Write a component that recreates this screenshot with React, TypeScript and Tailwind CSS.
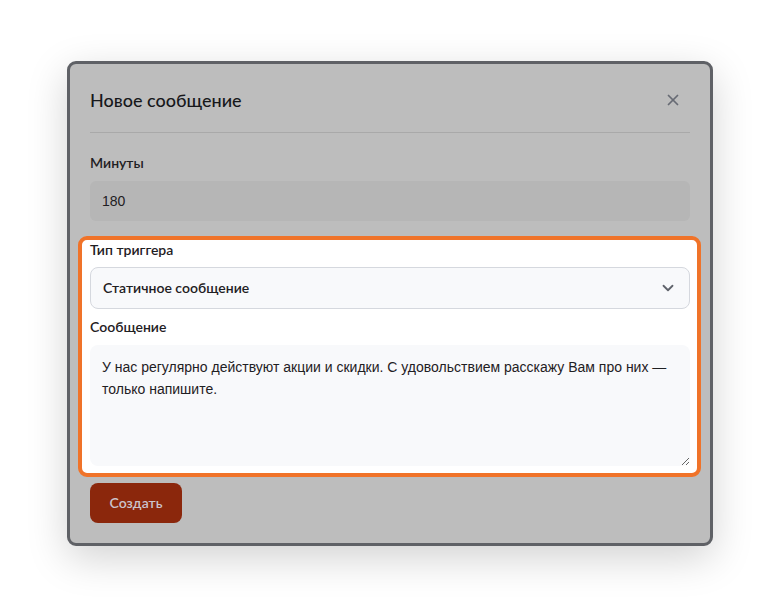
import { X, ChevronDown } from 'lucide-react'

export default function App() {
  return (
    <div className="min-h-[608px] w-full bg-white flex justify-center pt-[61px]" style={{ fontFamily: 'Lato, "Noto Sans", sans-serif' }}>
      <div className="w-[646px] h-[485px] bg-[#bdbdbd] border-[3px] border-[#5f6166] rounded-[9px] shadow-[0_12px_40px_rgba(0,0,0,0.18)] px-5 flex flex-col">
        {/* Шапка */}
        <div className="flex items-center justify-between pt-[22px] pb-[18px] border-b border-[#a9a9a9]">
          <h2 className="text-[18px] leading-7 font-medium text-[#17181b]">Новое сообщение</h2>
          <button className="text-[#676b74] mr-[8px]">
            <X className="w-[18px] h-[18px]" strokeWidth={2.3} />
          </button>
        </div>

        <div className="pt-5">
          <label className="block text-sm leading-5 font-semibold text-[#1f2023] mb-2">Минуты</label>
          <div className="h-10 rounded-md bg-[#b6b6b6] px-3 flex items-center text-sm text-[#1f2023]" style={{ fontFamily: '"Liberation Sans", Arial, sans-serif' }}>
            180
          </div>
        </div>

        {/* Подсвеченный блок */}
        <div className="mt-[15px] -ml-3 -mr-[11px] border-4 border-[#f07329] rounded-[9px] bg-white pl-2 pr-[7px] pb-[7px]">
          <label className="block text-sm leading-5 font-semibold text-[#1f2023] mb-[7px]">Тип триггера</label>
          <div className="h-[42px] rounded-lg bg-[#f8f9fb] border border-[#d5d8de] px-3 flex items-center justify-between">
            <span className="text-sm font-semibold text-[#1f2023]">Статичное сообщение</span>
            <ChevronDown className="w-[18px] h-[18px] text-[#5f636b]" strokeWidth={2.4} />
          </div>
          <label className="block text-sm leading-5 font-semibold text-[#1f2023] mt-2 mb-2">Сообщение</label>
          <textarea
            className="block w-full h-[121px] rounded-lg bg-[#f8f9fb] px-3 pt-[11px] text-sm leading-[22px] text-[#1f2023] outline-none"
            style={{ fontFamily: '"Liberation Sans", Arial, sans-serif' }}
            defaultValue="У нас регулярно действуют акции и скидки. С удовольствием расскажу Вам про них — только напишите."
          />
        </div>

        <div className="mt-[6px]">
          <button className="h-10 w-[92px] rounded-lg bg-[#8b270c] text-[#cbc3cb] text-sm font-semibold">Создать</button>
        </div>
      </div>
    </div>
  )
}
